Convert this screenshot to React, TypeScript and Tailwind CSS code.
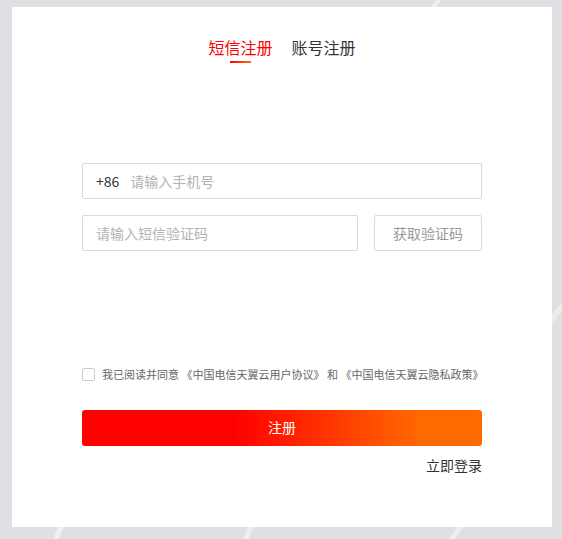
export default function App() {
  return (
    <div
      className="relative h-[539px] w-[562px] overflow-hidden bg-[#dfdfe4] pl-[12px] pt-[7px]"
      style={{ fontFamily: '"Noto Sans CJK SC", "Noto Sans", sans-serif' }}
    >
      {/* faint streaks in the backdrop */}
      <div className="absolute left-[55px] top-[515px] h-[40px] w-[5px] rotate-[25deg] bg-white/50" />
      <div className="absolute left-[245px] top-[515px] h-[40px] w-[5px] rotate-[25deg] bg-white/50" />
      <div className="absolute left-[452px] top-[515px] h-[40px] w-[5px] rotate-[35deg] bg-white/50" />
      <div className="absolute left-[548px] top-[290px] h-[60px] w-[6px] rotate-[40deg] bg-white/40" />
      <div className="absolute left-[435px] top-[-8px] h-[20px] w-[4px] rotate-[35deg] bg-white/50" />

      <div className="relative flex h-[520px] w-[540px] flex-col bg-white px-[70px] pt-[28px]">
        {/* Tabs */}
        <div className="flex justify-center gap-[19px] text-[16px] leading-[24px]">
          <div className="flex flex-col items-center">
            <span className="text-[#ff0000]">短信注册</span>
            <span className="mt-[2px] h-[2px] w-[21px] bg-[linear-gradient(90deg,#ff0000,#ff6a00)]" />
          </div>
          <span className="text-[#333]">账号注册</span>
        </div>

        {/* Phone */}
        <div className="mt-[100px] flex h-[36px] items-center rounded-[2px] border border-[#d9d9d9] px-[13px] text-[14px]">
          <span className="text-[#333]">+86</span>
          <span className="ml-[11px] text-[#b3b3b3]">请输入手机号</span>
        </div>

        {/* Code */}
        <div className="mt-[16px] flex gap-[16px]">
          <div className="flex h-[36px] flex-1 items-center rounded-[2px] border border-[#d9d9d9] px-[13px] text-[14px] text-[#b3b3b3]">
            请输入短信验证码
          </div>
          <div className="flex h-[36px] w-[108px] items-center justify-center rounded-[2px] border border-[#d9d9d9] text-[14px] text-[#999]">
            获取验证码
          </div>
        </div>

        {/* Agreement */}
        <div className="mt-[115px] flex items-center whitespace-nowrap text-[11px] text-[#666]">
          <span className="h-[13px] w-[13px] shrink-0 rounded-[2px] border border-[#ccc]" />
          <span className="ml-[7px]">
            我已阅读并同意 《中国电信天翼云用户协议》 和 《中国电信天翼云隐私政策》
          </span>
        </div>

        {/* Submit */}
        <div className="mt-[27px] flex h-[36px] items-center justify-center rounded-[3px] bg-[linear-gradient(90deg,#ff0000_38%,#ff6a00_85%)] text-[14px] text-white">
          注册
        </div>

        <div className="mt-[9px] text-right text-[14px] text-[#333]">立即登录</div>
      </div>
    </div>
  );
}
